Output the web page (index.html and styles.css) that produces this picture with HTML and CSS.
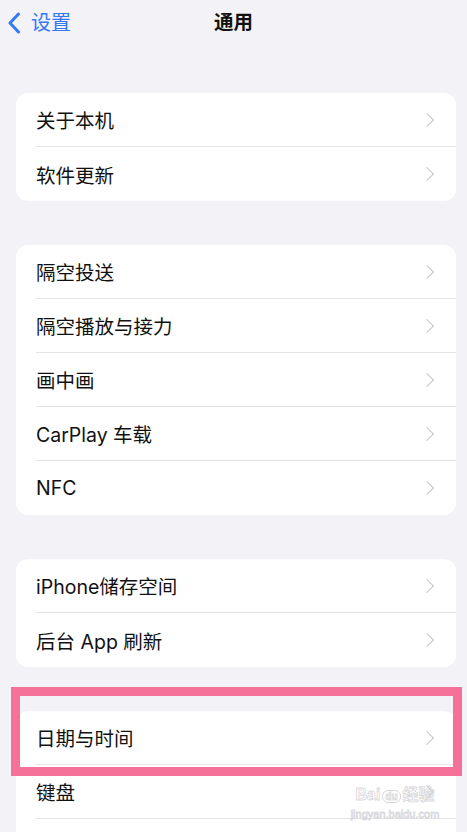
FILE: index.html
```html
<!DOCTYPE html>
<html lang="zh-CN">
<head>
    <meta charset="UTF-8">
    <meta name="viewport" content="width=device-width, initial-scale=1.0">
    <title>通用</title>
    <link rel="stylesheet" href="styles.css">
</head>
<body>
    <div class="navbar">
        <div class="back">
            <svg class="back-icon" width="14" height="22" viewBox="0 0 14 22">
                <path d="M11.5 2 L3 11 L11.5 20" fill="none" stroke="#3478f6" stroke-width="3" stroke-linecap="round" stroke-linejoin="round"/>
            </svg>
            <span>设置</span>
        </div>
        <h1 class="title">通用</h1>
    </div>

    <div class="group">
        <div class="row"><span>关于本机</span><i class="chevron"></i></div>
        <div class="row"><span>软件更新</span><i class="chevron"></i></div>
    </div>

    <div class="group">
        <div class="row"><span>隔空投送</span><i class="chevron"></i></div>
        <div class="row"><span>隔空播放与接力</span><i class="chevron"></i></div>
        <div class="row"><span>画中画</span><i class="chevron"></i></div>
        <div class="row"><span>CarPlay 车载</span><i class="chevron"></i></div>
        <div class="row"><span>NFC</span><i class="chevron"></i></div>
    </div>

    <div class="group">
        <div class="row"><span>iPhone储存空间</span><i class="chevron"></i></div>
        <div class="row"><span>后台 App 刷新</span><i class="chevron"></i></div>
    </div>

    <div class="group">
        <div class="row"><span>日期与时间</span><i class="chevron"></i></div>
        <div class="row"><span>键盘</span><i class="chevron"></i></div>
        <div class="row"></div>
    </div>

    <!-- highlight drawn over the screenshot -->
    <div class="highlight"></div>

    <div class="watermark">
        <div class="wm-logo">Bai<span class="wm-du">du</span>经验</div>
        <div class="wm-url">jingyan.baidu.com</div>
    </div>
</body>
</html>
```

FILE: styles.css
```css
html, body {
    height: 100%;
    overflow: hidden;
}
body {
    margin: 0;
    background-color: #f2f2f7;
    font-family: "Inter", "Noto Sans CJK SC", sans-serif;
    color: #111;
    position: relative;
}
.navbar {
    height: 46px;
    display: flex;
    align-items: center;
    justify-content: center;
    position: relative;
    margin-bottom: 47px;
}
.back {
    position: absolute;
    left: 7px;
    top: 12px;
    display: flex;
    align-items: center;
    gap: 10px;
    color: #3478f6;
    font-size: 20px;
    line-height: 22px;
}
.title {
    margin: 0;
    font-size: 19.5px;
    font-weight: 600;
    line-height: 1;
}
.group {
    margin: 0 11px 44px 16px;
    background-color: #fff;
    border-radius: 12px;
    overflow: hidden;
}
.row {
    height: 54px;
    margin-left: 20px;
    padding-right: 20px;
    display: flex;
    align-items: center;
    justify-content: space-between;
    font-size: 19.5px;
    border-bottom: 1px solid #e3e3e6;
    box-sizing: border-box;
}
.row:last-child {
    border-bottom: none;
}
.chevron {
    width: 9px;
    height: 9px;
    border-top: 1.8px solid #c4c4c8;
    border-right: 1.8px solid #c4c4c8;
    transform: rotate(45deg);
    margin-right: 4px;
}
.highlight {
    position: absolute;
    left: 11px;
    top: 687px;
    width: 451px;
    height: 89px;
    border: 9px solid #f5719a;
    box-sizing: border-box;
}
.watermark {
    position: absolute;
    left: 350px;
    top: 785px;
    width: 90px;
    text-align: center;
    color: transparent;
    -webkit-text-stroke: 0.8px #d8d8dc;
}
.wm-logo {
    font-family: "Liberation Sans", "Noto Sans CJK SC", sans-serif;
    font-size: 16px;
    font-weight: bold;
    line-height: 20px;
    white-space: nowrap;
}
.wm-du {
    font-size: 10px;
    margin: 0 2px;
    padding: 0 2px;
    border: 1px solid #d8d8dc;
    border-radius: 6px;
}
.wm-url {
    font-family: "Liberation Sans", sans-serif;
    font-size: 11px;
    line-height: 14px;
    white-space: nowrap;
}
```
